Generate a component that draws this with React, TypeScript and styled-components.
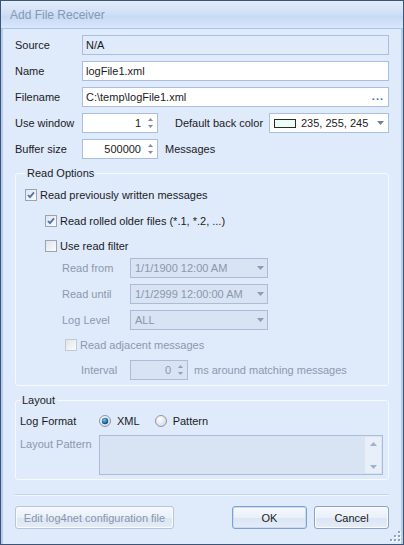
import React from "react";
import styled, { createGlobalStyle } from "styled-components";

const GlobalStyle = createGlobalStyle`
  html, body {
    margin: 0;
    padding: 0;
    background: #ffffff;
  }
  body {
    font-family: "Liberation Sans", Arial, sans-serif;
    font-size: 11px;
    color: #1b1b1b;
  }
  * {
    box-sizing: border-box;
  }
`;

const Window = styled.div`
  position: relative;
  width: 404px;
  height: 545px;
  border: 1px solid #3b5478;
  display: flex;
  flex-direction: column;
  background: #dfeafb;
`;

const TitleBar = styled.div`
  height: 28px;
  flex-shrink: 0;
  padding-left: 9px;
  display: flex;
  align-items: center;
  background: linear-gradient(#e3edfa 0%, #d5e3f7 35%, #c8daf4 60%, #d9e7f9 100%);
  border-bottom: 1px solid #a9c7ee;
  font-size: 12px;
  color: #8798b4;
`;

const Body = styled.div`
  flex: 1;
  display: flex;
  flex-direction: column;
  padding: 6px 12px 0;
  border-left: 2px solid #b7cdee;
  border-right: 2px solid #b7cdee;
`;

const FormGrid = styled.div`
  display: grid;
  grid-template-columns: 67px 1fr;
  row-gap: 6px;
  align-items: center;
`;

const Label = styled.span<{ $disabled?: boolean }>`
  line-height: 14px;
  white-space: nowrap;
  color: ${(p) => (p.$disabled ? "#8c99ad" : "#1b1b1b")};
`;

const TextBox = styled.div<{ $readOnly?: boolean }>`
  height: 20px;
  display: flex;
  align-items: center;
  padding: 0 3px;
  border: 1px solid #a9bfdd;
  background: ${(p) => (p.$readOnly ? "#dfeafb" : "#ffffff")};
`;

const Value = styled.span`
  flex: 1;
  white-space: nowrap;
  overflow: hidden;
`;

const Ellipsis = styled.span`
  color: #4d6c9c;
  font-weight: bold;
  letter-spacing: 1px;
  padding-right: 1px;
  line-height: 8px;
  height: 10px;
`;

const InlineRow = styled.div`
  display: flex;
  align-items: center;
`;

const Spin = styled.div<{ $width: number; $disabled?: boolean }>`
  width: ${(p) => p.$width}px;
  height: 20px;
  flex-shrink: 0;
  display: flex;
  align-items: center;
  border: 1px solid ${(p) => (p.$disabled ? "#a9bdd8" : "#a9bfdd")};
  background: ${(p) => (p.$disabled ? "#d8e3f3" : "#ffffff")};
  color: ${(p) => (p.$disabled ? "#8a98ad" : "#1b1b1b")};
`;

const SpinValue = styled.span`
  flex: 1;
  text-align: right;
  padding-right: 2px;
`;

const SpinArrows = styled.span`
  width: 14px;
  display: flex;
  flex-direction: column;
  align-items: center;
  gap: 4px;
`;

const SideText = styled.span<{ $gap: number; $disabled?: boolean }>`
  margin-left: ${(p) => p.$gap}px;
  white-space: nowrap;
  color: ${(p) => (p.$disabled ? "#8c99ad" : "#1b1b1b")};
`;

const ColorCombo = styled.div`
  margin-left: auto;
  width: 120px;
  height: 20px;
  display: flex;
  align-items: center;
  padding: 0 4px;
  border: 1px solid #a9bfdd;
  background: #ffffff;
`;

const Swatch = styled.span<{ $color: string }>`
  width: 22px;
  height: 9px;
  margin-right: 5px;
  border: 1px solid #2b2b2b;
  background: ${(p) => p.$color};
`;

const Combo = styled.div`
  width: 138px;
  height: 20px;
  display: flex;
  align-items: center;
  padding: 0 3px 0 4px;
  border: 1px solid #a9bdd8;
  background: #d8e3f3;
  color: #8a98ad;
`;

const Group = styled.fieldset<{ $padLeft: number; $padBottom: number }>`
  margin: 8px 0 0;
  padding: 0 5px ${(p) => p.$padBottom}px ${(p) => p.$padLeft}px;
  border: 1px solid #f6f9fe;
  border-radius: 3px;
  min-width: 0;
`;

const Legend = styled.legend`
  padding: 0 2px;
  line-height: 13px;
  color: #1b1b1b;
`;

const Row = styled.div<{ $mt: number; $indent?: number }>`
  display: flex;
  align-items: center;
  margin-top: ${(p) => p.$mt}px;
  padding-left: ${(p) => p.$indent ?? 0}px;
`;

const CheckLabel = styled.span<{ $disabled?: boolean }>`
  margin-left: 3px;
  line-height: 14px;
  white-space: nowrap;
  color: ${(p) => (p.$disabled ? "#8c99ad" : "#1b1b1b")};
`;

const FieldLabel = styled.span<{ $width: number }>`
  width: ${(p) => p.$width}px;
  flex-shrink: 0;
  color: #8c99ad;
  white-space: nowrap;
`;

const LayoutGrid = styled.div`
  display: grid;
  grid-template-columns: 79px 1fr;
  row-gap: 7px;
  margin-top: 7px;
`;

const RadioGroup = styled.div`
  display: flex;
  align-items: center;
`;

const RadioText = styled.span<{ $gap: number }>`
  margin-left: 6px;
  margin-right: ${(p) => p.$gap}px;
  line-height: 14px;
`;

const PatternLabel = styled.span`
  padding-top: 2px;
  color: #8c99ad;
  line-height: 14px;
`;

const PatternBox = styled.div`
  height: 40px;
  display: flex;
  justify-content: flex-end;
  border: 1px solid #a9bdd8;
  background: #d8e3f3;
  padding: 1px;
`;

const ScrollBar = styled.div`
  width: 16px;
  display: flex;
  flex-direction: column;
  align-items: center;
  justify-content: space-between;
  padding: 5px 0 4px;
  background: #e9eff8;
`;

const Separator = styled.div`
  margin-top: 14px;
  border-top: 1px solid #c4d2e5;
  border-bottom: 1px solid #f3f7fd;
`;

const ButtonBar = styled.div`
  display: flex;
  gap: 7px;
  margin-top: 10px;
`;

const Button = styled.button<{ $width: number; $variant?: "default" | "disabled" }>`
  width: ${(p) => p.$width}px;
  height: 23px;
  padding: 0;
  font: inherit;
  border-radius: 3px;
  border: 1px solid
    ${(p) => (p.$variant === "default" ? "#7ea1d4" : p.$variant === "disabled" ? "#b7c5d8" : "#8fa2be")};
  background: linear-gradient(#f6f9fd 0%, #e9f0f9 50%, #dbe6f4 51%, #e4ecf7 100%);
  color: ${(p) => (p.$variant === "disabled" ? "#8796ab" : "#1b1b1b")};
  box-shadow: inset 0 0 0 1px ${(p) => (p.$variant === "default" ? "#c9dcf5" : "#f7faff")};
`;

const Spacer = styled.div`
  flex: 1;
`;

const Grip = styled.svg`
  position: absolute;
  right: 2px;
  bottom: 2px;
`;

const TriangleDown = ({ color = "#6f819f" }: { color?: string }) => (
  <svg width="7" height="4" viewBox="0 0 7 4">
    <path d="M0 0h7L3.5 4z" fill={color} />
  </svg>
);

const TriangleUp = ({ color = "#6f819f" }: { color?: string }) => (
  <svg width="7" height="4" viewBox="0 0 7 4">
    <path d="M0 4h7L3.5 0z" fill={color} />
  </svg>
);

const Arrows = ({ color }: { color?: string }) => (
  <SpinArrows>
    <svg width="5" height="3" viewBox="0 0 5 3">
      <path d="M0 3h5L2.5 0z" fill={color ?? "#7d8ca5"} />
    </svg>
    <svg width="5" height="3" viewBox="0 0 5 3">
      <path d="M0 0h5L2.5 3z" fill={color ?? "#7d8ca5"} />
    </svg>
  </SpinArrows>
);

const CheckBox = ({ checked, disabled }: { checked?: boolean; disabled?: boolean }) => (
  <svg width="12" height="12" viewBox="0 0 12 12">
    <defs>
      <linearGradient id="cbfill" x1="0" y1="0" x2="1" y2="1">
        <stop offset="0" stopColor="#dfe3e9" />
        <stop offset="1" stopColor="#fbfcfd" />
      </linearGradient>
    </defs>
    <rect x="0.5" y="0.5" width="11" height="11" fill="url(#cbfill)" stroke={disabled ? "#c1c9d5" : "#98a3b4"} />
    {checked && (
      <path d="M3 6l2 2.2L9 3.4" fill="none" stroke="#5372a3" strokeWidth="1.8" />
    )}
  </svg>
);

const Radio = ({ checked }: { checked?: boolean }) => (
  <svg width="12" height="12" viewBox="0 0 12 12">
    <defs>
      <radialGradient id="rdfill" cx="0.4" cy="0.35" r="0.7">
        <stop offset="0" stopColor="#ffffff" />
        <stop offset="1" stopColor="#d3d8df" />
      </radialGradient>
      <radialGradient id="rddot" cx="0.4" cy="0.35" r="0.6">
        <stop offset="0" stopColor="#7cc3f2" />
        <stop offset="1" stopColor="#0c4f8c" />
      </radialGradient>
    </defs>
    <circle cx="6" cy="6" r="5.5" fill="url(#rdfill)" stroke="#8c97a8" />
    {checked && <circle cx="6" cy="6" r="3.2" fill="url(#rddot)" />}
  </svg>
);

export default function App() {
  return (
    <>
      <GlobalStyle />
      <Window>
        <TitleBar>Add File Receiver</TitleBar>
        <Body>
          <FormGrid>
            <Label>Source</Label>
            <TextBox $readOnly>
              <Value>N/A</Value>
            </TextBox>

            <Label>Name</Label>
            <TextBox>
              <Value>logFile1.xml</Value>
            </TextBox>

            <Label>Filename</Label>
            <TextBox>
              <Value>C:\temp\logFile1.xml</Value>
              <Ellipsis>...</Ellipsis>
            </TextBox>

            <Label>Use window</Label>
            <InlineRow>
              <Spin $width={76}>
                <SpinValue>1</SpinValue>
                <Arrows />
              </Spin>
              <SideText $gap={17}>Default back color</SideText>
              <ColorCombo>
                <Swatch $color="rgb(235, 255, 245)" />
                <Value>235, 255, 245</Value>
                <TriangleDown />
              </ColorCombo>
            </InlineRow>

            <Label>Buffer size</Label>
            <InlineRow>
              <Spin $width={76}>
                <SpinValue>500000</SpinValue>
                <Arrows />
              </Spin>
              <SideText $gap={7}>Messages</SideText>
            </InlineRow>
          </FormGrid>

          <Group $padLeft={9} $padBottom={5}>
            <Legend>Read Options</Legend>
            <Row $mt={8}>
              <CheckBox checked />
              <CheckLabel>Read previously written messages</CheckLabel>
            </Row>
            <Row $mt={12} $indent={20}>
              <CheckBox checked />
              <CheckLabel>Read rolled older files (*.1, *.2, ...)</CheckLabel>
            </Row>
            <Row $mt={11} $indent={20}>
              <CheckBox />
              <CheckLabel>Use read filter</CheckLabel>
            </Row>
            <Row $mt={5} $indent={37}>
              <FieldLabel $width={68}>Read from</FieldLabel>
              <Combo>
                <Value>1/1/1900 12:00 AM</Value>
                <TriangleDown color="#8e9bb0" />
              </Combo>
            </Row>
            <Row $mt={6} $indent={37}>
              <FieldLabel $width={68}>Read until</FieldLabel>
              <Combo>
                <Value>1/1/2999 12:00:00 AM</Value>
                <TriangleDown color="#8e9bb0" />
              </Combo>
            </Row>
            <Row $mt={6} $indent={37}>
              <FieldLabel $width={68}>Log Level</FieldLabel>
              <Combo>
                <Value>ALL</Value>
                <TriangleDown color="#8e9bb0" />
              </Combo>
            </Row>
            <Row $mt={8} $indent={40}>
              <CheckBox disabled />
              <CheckLabel $disabled>Read adjacent messages</CheckLabel>
            </Row>
            <Row $mt={8} $indent={56}>
              <FieldLabel $width={49}>Interval</FieldLabel>
              <Spin $width={58} $disabled>
                <SpinValue>0</SpinValue>
                <Arrows color="#95a2b6" />
              </Spin>
              <SideText $gap={6} $disabled>ms around matching messages</SideText>
            </Row>
          </Group>

          <Group $padLeft={4} $padBottom={4}>
            <Legend>Layout</Legend>
            <LayoutGrid>
              <Label>Log Format</Label>
              <RadioGroup>
                <Radio checked />
                <RadioText $gap={15}>XML</RadioText>
                <Radio />
                <RadioText $gap={0}>Pattern</RadioText>
              </RadioGroup>
              <PatternLabel>Layout Pattern</PatternLabel>
              <PatternBox>
                <ScrollBar>
                  <TriangleUp color="#9fb1cc" />
                  <TriangleDown color="#9fb1cc" />
                </ScrollBar>
              </PatternBox>
            </LayoutGrid>
          </Group>

          <Separator />

          <ButtonBar>
            <Button $width={159} $variant="disabled">
              Edit log4net configuration file
            </Button>
            <Spacer />
            <Button $width={75} $variant="default">
              OK
            </Button>
            <Button $width={75}>Cancel</Button>
          </ButtonBar>
        </Body>
        <Grip width="12" height="12" viewBox="0 0 12 12">
          {[
            [9, 1],
            [9, 5],
            [5, 5],
            [9, 9],
            [5, 9],
            [1, 9],
          ].map(([x, y]) => (
            <g key={`${x}-${y}`}>
              <rect x={x + 1} y={y + 1} width="2" height="2" fill="#ffffff" />
              <rect x={x} y={y} width="2" height="2" fill="#8ea3c2" />
            </g>
          ))}
        </Grip>
      </Window>
    </>
  );
}
